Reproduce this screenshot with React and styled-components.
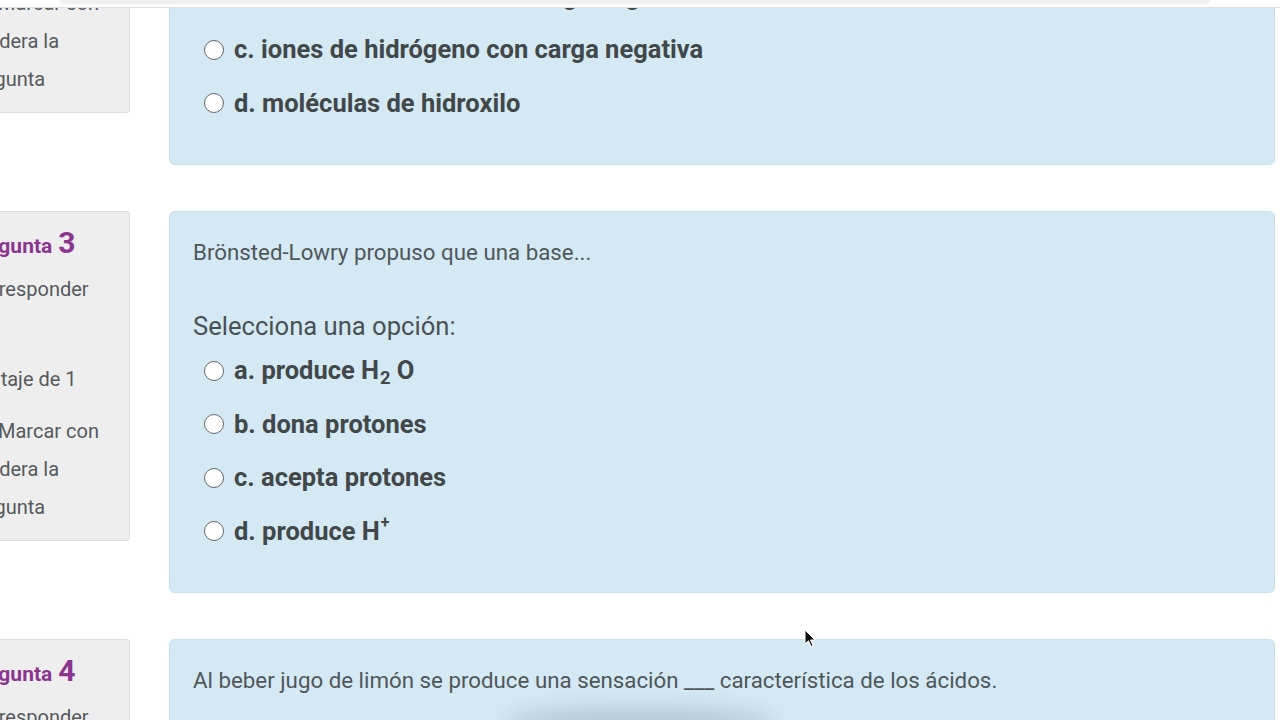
import React from "react";
import styled, { createGlobalStyle } from "styled-components";

const Global = createGlobalStyle`
  html, body {
    margin: 0;
    padding: 0;
    background: #ffffff;
    overflow: hidden;
  }
  body {
    font-family: Roboto, "Noto Sans", "Liberation Sans", sans-serif;
    color: #4b5054;
  }
  * { box-sizing: border-box; }
`;

const TopBar = styled.div`
  position: fixed;
  top: 0;
  left: 0;
  right: 0;
  height: 8px;
  background: #ffffff;
  border-bottom: 1px solid #dedede;
  z-index: 10;
  display: flex;
  padding: 0 70px 0 60px;
`;

const TopPill = styled.div`
  flex: 1;
  height: 4px;
  background: #efeff2;
  border-radius: 0 0 6px 6px;
`;

const Page = styled.main`
  display: flex;
  flex-direction: column;
  gap: 46px;
  margin: -217px 5px 0 -48px;
`;

const Question = styled.section`
  display: flex;
  align-items: flex-start;
  gap: 39px;
`;

const Info = styled.aside`
  flex: none;
  width: 178px;
  background: #eeeeee;
  border: 1px solid #dcdcdc;
  border-radius: 3px;
  padding: 12px 12px 14px 13px;
  font-size: 20px;
  line-height: 38px;
  color: #555a5d;
`;

const Title = styled.h3`
  margin: 0 0 5px;
  font-size: 21px;
  font-weight: 700;
  color: #8b3590;
  line-height: 38px;
`;

const QNumber = styled.span`
  font-size: 30px;
  margin-left: 6px;
`;

const InfoItem = styled.div`
  & + & {
    margin-top: 14px;
  }
`;

const Flag = styled.span`
  display: inline-block;
  width: 22px;
  margin-right: 10px;
`;

const Formulation = styled.div`
  flex: 1;
  background: #d4e9f4;
  border: 1px solid #c6e0ee;
  border-radius: 6px;
  padding: 23px 25px 34px 23px;
`;

const QText = styled.p`
  margin: 0 0 40px;
  font-size: 22.3px;
  line-height: 34px;
  color: #50565a;
`;

const Prompt = styled.div`
  font-size: 25.6px;
  line-height: 34px;
  color: #4b5054;
  margin-bottom: 1px;
`;

const Answers = styled.div`
  display: flex;
  flex-direction: column;
`;

const Option = styled.label`
  display: flex;
  align-items: center;
  gap: 10px;
  padding: 8px 0 8px 11px;
  font-size: 25.5px;
  font-weight: 700;
  line-height: 37.5px;
  color: #42474a;
`;

const Radio = styled.span`
  flex: none;
  width: 20px;
  height: 20px;
  border-radius: 50%;
  border: 1.5px solid #62676a;
  background: #ffffff;
`;

const Sub = styled.sub`
  font-size: 0.72em;
  vertical-align: -0.25em;
  line-height: 0;
  margin: 0 6px 0 1px;
`;

const Sup = styled.sup`
  font-size: 0.62em;
  vertical-align: 0.7em;
  line-height: 0;
  margin-left: 1px;
`;

const Pointer = styled.svg`
  position: fixed;
  left: 804px;
  top: 629px;
  width: 12px;
  height: 19px;
  z-index: 20;
`;

const Smudge = styled.div`
  position: fixed;
  left: 505px;
  top: 708px;
  width: 270px;
  height: 32px;
  border-radius: 50%;
  background: rgba(110, 130, 140, 0.32);
  filter: blur(11px);
  z-index: 5;
`;

const questions = [
  {
    n: 2,
    text: "Según Arrhenius, una base en solución acuosa libera...",
    options: [
      "a. iones de hidrógeno con carga positiva",
      "b. iones de hidróxido con carga negativa",
      "c. iones de hidrógeno con carga negativa",
      "d. moléculas de hidroxilo",
    ],
  },
  {
    n: 3,
    text: "Brönsted-Lowry propuso que una base...",
    options: [
      <>a. produce H<Sub>2</Sub>O</>,
      "b. dona protones",
      "c. acepta protones",
      <>d. produce H<Sup>+</Sup></>,
    ],
  },
  {
    n: 4,
    text: "Al beber jugo de limón se produce una sensación ___ característica de los ácidos.",
    options: ["a. amarga", "b. agria", "c. dulce", "d. salada"],
  },
];

function QuestionBlock({ q }) {
  return (
    <Question>
      <Info>
        <Title>
          Pregunta<QNumber>{q.n}</QNumber>
        </Title>
        <InfoItem>Sin responder aún</InfoItem>
        <InfoItem>Puntaje de 1</InfoItem>
        <InfoItem>
          <Flag />
          Marcar con bandera la pregunta
        </InfoItem>
      </Info>
      <Formulation>
        <QText>{q.text}</QText>
        <Prompt>Selecciona una opción:</Prompt>
        <Answers>
          {q.options.map((o, i) => (
            <Option key={i}>
              <Radio />
              <span>{o}</span>
            </Option>
          ))}
        </Answers>
      </Formulation>
    </Question>
  );
}

export default function App() {
  return (
    <>
      <Global />
      <TopBar>
        <TopPill />
      </TopBar>
      <Page>
        {questions.map((q) => (
          <QuestionBlock key={q.n} q={q} />
        ))}
      </Page>
      <Smudge />
      <Pointer viewBox="0 0 12 19">
        <path
          d="M1 1 L1 15 L4.5 11.8 L7 17.5 L9 16.6 L6.6 11 L11 11 Z"
          fill="#111"
          stroke="#fff"
          strokeWidth="1"
          strokeLinejoin="round"
        />
      </Pointer>
    </>
  );
}
